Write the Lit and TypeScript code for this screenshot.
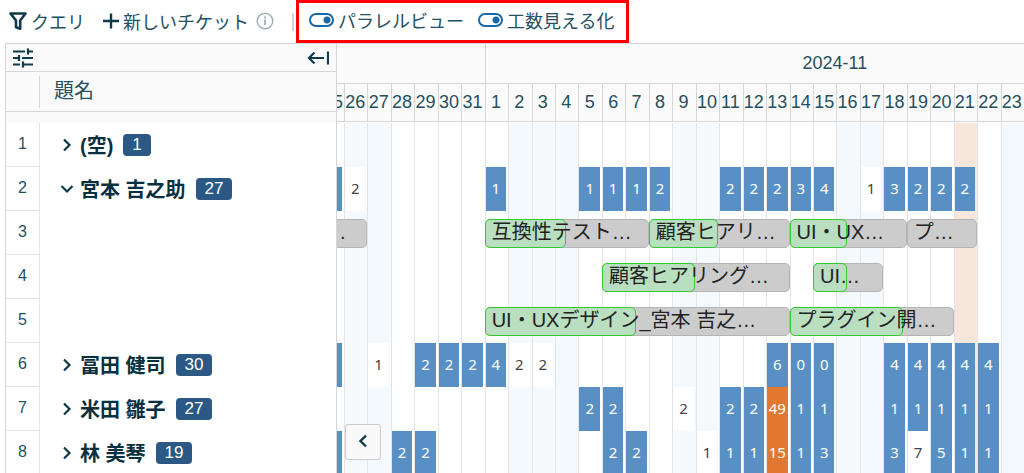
import { LitElement, html, css, svg, nothing } from "lit";
import { customElement, property } from "lit/decorators.js";
import { classMap } from "lit/directives/class-map.js";

interface Bar {
  from: number;
  to: number;
  progress: number;
  text: string;
}

interface Row {
  no: number;
  name?: string;
  count?: number;
  open?: boolean;
  load?: Record<number, number>;
  bars?: Bar[];
}

// Day index 0 is October 25; index 7 is November 1.
const NOV = 6;
const DAYS = Array.from({ length: 30 }, (_, i) => (i < 7 ? 25 + i : i - NOV));
const HOLIDAYS = new Set([1, 2, ...[2, 3, 4, 9, 10, 16, 17, 23].map((d) => d + NOV)]);
const TODAY = 21 + NOV;
const CAPACITY = 14;

const ROWS: Row[] = [
  { no: 1, name: "(空)", count: 1 },
  {
    no: 2, name: "宮本 吉之助", count: 27, open: true,
    load: { 0: 2, 1: 2, 7: 1, 11: 1, 12: 1, 13: 1, 14: 2, 17: 2, 18: 2, 19: 2, 20: 3, 21: 4, 23: 1, 24: 3, 25: 2, 26: 2, 27: 2 },
  },
  {
    no: 3,
    bars: [
      { from: 0, to: 1, progress: 0, text: "." },
      { from: 7, to: 13, progress: 50, text: "互換性テスト…" },
      { from: 14, to: 19, progress: 50, text: "顧客ヒアリ…" },
      { from: 20, to: 24, progress: 50, text: "UI・UX…" },
      { from: 25, to: 27, progress: 0, text: "プ…" },
    ],
  },
  {
    no: 4,
    bars: [
      { from: 12, to: 19, progress: 50, text: "顧客ヒアリング…" },
      { from: 21, to: 23, progress: 50, text: "UI…" },
    ],
  },
  {
    no: 5,
    bars: [
      { from: 7, to: 19, progress: 50, text: "UI・UXデザイン_宮本 吉之…" },
      { from: 20, to: 26, progress: 70, text: "プラグイン開…" },
    ],
  },
  {
    no: 6, name: "冨田 健司", count: 30,
    load: { 0: 2, 2: 1, 4: 2, 5: 2, 6: 2, 7: 4, 8: 2, 9: 2, 19: 6, 20: 0, 21: 0, 24: 4, 25: 4, 26: 4, 27: 4, 28: 4 },
  },
  {
    no: 7, name: "米田 雛子", count: 27,
    load: { 11: 2, 12: 2, 15: 2, 17: 2, 18: 2, 19: 49, 20: 1, 21: 1, 24: 1, 25: 1, 26: 1, 27: 1, 28: 1 },
  },
  {
    no: 8, name: "林 美琴", count: 19,
    load: { 0: 2, 3: 2, 4: 2, 12: 2, 13: 2, 16: 1, 17: 1, 18: 1, 19: 15, 20: 1, 21: 3, 24: 3, 25: 7, 26: 5, 27: 1, 28: 1 },
  },
];

// Days whose hours are shown without a filled background.
const PLAIN: Record<number, number[]> = { 2: [1, 23], 6: [2, 8, 9], 7: [15], 8: [16, 25] };

const icon = (w: number, h: number, body: unknown) =>
  html`<svg width=${w} height=${h} viewBox="0 0 ${w} ${h}" fill="none" stroke="currentColor" stroke-width="2" aria-hidden="true">${body}</svg>`;

const icons = {
  filter: icon(18, 18, svg`<path d="M1.500 1.500h15l-5.300 7v8.200l-4.200-1.500v-6.700z" stroke-width="2.600" stroke-linejoin="round"/>`),
  plus: icon(16, 16, svg`<path d="M8 0.500v15M0 8h16" stroke-width="2.400"/>`),
  info: icon(18, 18, svg`<circle cx="9" cy="9" r="7.800" stroke-width="1.500"/><path d="M9 7.500v5.500M9 4.600v1.800" stroke-width="1.800"/>`),
  tune: icon(20, 20, svg`<path d="M0 3.500h12M15 3.500h5M15 0.500v6M0 10h6M6 7v6M9 10h11M0 16.500h7M10 16.500h10M10 13.500v6" stroke-width="2.200"/>`),
  collapse: icon(22, 14, svg`<path d="M7.500 1.500 2 7l5.500 5.500M2 7h15M21 0.500v13" stroke-width="2.200"/>`),
  right: icon(10, 14, svg`<path d="m2 1.500 5.500 5.500-5.500 5.500" stroke-width="2.200"/>`),
  down: icon(14, 10, svg`<path d="m1.500 2 5.500 5.500 5.500-5.500" stroke-width="2.200"/>`),
  back: icon(10, 14, svg`<path d="M8 1.500 2.500 7 8 12.500" stroke-width="2.400"/>`),
};

@customElement("gantt-toolbar")
export class GanttToolbar extends LitElement {
  static styles = css`
    :host { display: flex; align-items: center; height: 43px; flex: none; padding-left: 9px; box-sizing: border-box; }
    button { display: flex; align-items: center; gap: 4px; padding: 0 0 2px; border: 0; background: none; color: #0e3a4a; font: inherit; white-space: nowrap; }
    svg { flex: none; }
    .text { color: #24505f; }
    .new { margin-left: 18px; }
    .info { color: #9fb0ba; margin-left: 7px; }
    .sep { width: 2px; height: 18px; margin-left: 18px; background: #d3d3d3; }
    .toggles { display: flex; align-items: center; gap: 14px; box-sizing: border-box; height: 43px; margin-left: 2px; padding: 0 12px 3px 10px; border: 3px solid #f00; }
    label { display: flex; align-items: center; gap: 4px; white-space: nowrap; color: #24505f; }
    input { appearance: none; box-sizing: border-box; width: 25px; height: 14px; margin: 0; border: 2px solid #1c68a6; border-radius: 7px; }
    input:checked { background: radial-gradient(circle at 16px 5px, #1c68a6 3px, transparent 4px); }
  `;

  render() {
    return html`
      <button type="button">${icons.filter}<span class="text">クエリ</span></button>
      <button type="button" class="new">${icons.plus}<span class="text">新しいチケット</span></button>
      <button type="button" class="info" aria-label="情報">${icons.info}</button>
      <span class="sep"></span>
      <div class="toggles">
        <label><input type="checkbox" checked />パラレルビュー</label>
        <label><input type="checkbox" checked />工数見える化</label>
      </div>
    `;
  }
}

@customElement("gantt-list")
export class GanttList extends LitElement {
  @property({ attribute: false }) rows: Row[] = [];

  static styles = css`
    :host { display: block; box-sizing: border-box; width: 332px; flex: none; border: 1px solid #d6d6d6; border-width: 1px 1px 0; overflow: hidden; }
    button { display: flex; padding: 0; border: 0; background: none; color: #0e3a4a; }
    .tools { display: flex; justify-content: space-between; align-items: center; height: 28px; padding: 0 7px; box-sizing: border-box; background: #fafafa; border-bottom: 1px solid #d6d6d6; }
    .title { display: flex; align-items: center; height: 40px; box-sizing: border-box; background: #fafafa; border-bottom: 1px solid #d6d6d6; font-size: 20px; color: #24505f; }
    .title::before { content: ""; width: 33px; height: 32px; border-right: 1px solid #d6d6d6; }
    .title span { padding: 0 0 4px 14px; }
    .gap { height: 11px; background: #fafafa; }
    .row { display: flex; height: 44px; }
    .no { display: flex; align-items: center; justify-content: center; box-sizing: border-box; width: 34px; padding-bottom: 2px; border: 1px solid #e4e4e4; border-width: 0 1px 1px 0; font: 16px "Liberation Sans", sans-serif; color: #24505f; }
    .name { display: flex; align-items: center; font-family: "Liberation Sans", "Noto Sans CJK JP", sans-serif; font-size: 20px; font-weight: bold; color: #08303f; }
    .name span { margin-bottom: 2px; }
    .name button { width: 20px; margin: 0 3px 0 17px; justify-content: center; }
    .name .badge { margin: 0 0 0 10px; padding: 0 9px; border-radius: 4px; background: #2b5884; color: #fff; font: 17px/22px "Liberation Sans", sans-serif; }
  `;

  render() {
    return html`
      <div class="tools">
        <button type="button" aria-label="設定">${icons.tune}</button>
        <button type="button" aria-label="折りたたむ">${icons.collapse}</button>
      </div>
      <div class="title"><span>題名</span></div>
      <div class="gap"></div>
      ${this.rows.map(
        (r) => html`<div class="row">
          <div class="no">${r.no}</div>
          ${r.name
            ? html`<div class="name">
                <button type="button" aria-label="開閉">${r.open ? icons.down : icons.right}</button>
                <span>${r.name}</span><span class="badge">${r.count}</span>
              </div>`
            : nothing}
        </div>`
      )}
    `;
  }
}

@customElement("gantt-timeline")
export class GanttTimeline extends LitElement {
  @property({ attribute: false }) rows: Row[] = [];

  static styles = css`
    :host { display: block; position: relative; flex: 1; min-width: 0; overflow: hidden; }
    .canvas { width: calc(7px + (100% - 7px) * 36 / 29); }
    .grid { display: grid; grid-template-columns: 7px repeat(36, minmax(0, 1fr)); }
    .head { box-sizing: border-box; background: #fafafa; border-top: 1px solid #d6d6d6; color: #24505f; font: 18px "Liberation Sans", sans-serif; }
    .months { height: 40px; }
    .month { display: flex; align-items: center; justify-content: center; }
    .month + .month { padding-right: 4px; border-left: 1px solid #d6d6d6; }
    .days { height: 39px; border-bottom: 1px solid #d6d6d6; }
    .day { display: flex; align-items: center; justify-content: center; padding-right: 2px; border-left: 1px solid #d6d6d6; }
    .day:first-child { justify-content: flex-end; padding-right: 1px; border: 0; overflow: hidden; }
    .body { padding-top: 1px; }
    .row { height: 44px; }
    .slot { grid-row: 1; border-left: 1px solid #e4e4e4; }
    .slot:first-child { border-left: 0; }
    .off { background: #f4f9fe; }
    .today { background: #f6e6dc; }
    .load { display: flex; align-items: center; justify-content: center; box-sizing: border-box; height: 44px; margin-right: 2px; padding-bottom: 2px; background: #5890c6; color: #fff; font: 15px "Noto Sans", sans-serif; }
    .plain { background: #fff; color: #444; }
    .over { background: #e27730; }
    .bar { grid-row: 1; position: relative; box-sizing: border-box; height: 29px; margin-top: 8px; border: 1px solid #b4b4b4; border-radius: 5px; background: #ccc; font: 20px/24px "Liberation Sans", "Noto Sans CJK JP", sans-serif; color: #222; white-space: nowrap; }
    .done { position: absolute; top: -1px; left: -1px; box-sizing: border-box; height: 29px; border: 1px solid #2fcb2f; border-radius: 5px; background: #b9dfc0; }
    .label { position: relative; display: block; padding-left: 6px; }
    .cut { border-left: 0; border-radius: 0 5px 5px 0; }
    .cut .label { padding-left: 3px; }
    .prev { position: absolute; left: 8px; bottom: 13px; display: flex; align-items: center; justify-content: center; width: 36px; height: 36px; padding: 0 0 2px; border: 1px solid #ccc; border-radius: 3px; background: #f9f9f9; color: #0e3a4a; }
  `;

  private slot_(row: Row, i: number) {
    const hours = row.load?.[i];
    const cls = {
      load: true,
      plain: !!PLAIN[row.no]?.includes(i),
      over: (hours ?? 0) > CAPACITY,
    };
    return html`<div class=${classMap({ slot: true, off: HOLIDAYS.has(i), today: i === TODAY })} style="grid-column:${i + 1}">
      ${hours === undefined ? nothing : html`<div class=${classMap(cls)}>${i === 0 ? nothing : hours}</div>`}
    </div>`;
  }

  private bar_(b: Bar) {
    return html`<div
      class=${classMap({ bar: true, cut: b.from === 0 })}
      style="grid-column:${b.from + 1} / ${b.to + 2}"
    >
      ${b.progress ? html`<div class="done" style="width:${b.progress}%"></div>` : nothing}
      <span class="label">${b.text}</span>
    </div>`;
  }

  render() {
    return html`
      <div class="canvas">
        <div class="grid head months">
          <div class="month" style="grid-column:1 / 8"></div>
          <div class="month" style="grid-column:8 / 38">2024-11</div>
        </div>
        <div class="grid head days">${DAYS.map((d) => html`<div class="day">${d}</div>`)}</div>
        <div class="body">
          ${this.rows.map(
            (r) => html`<div class="grid row">${DAYS.map((_, i) => this.slot_(r, i))}${r.bars?.map((b) => this.bar_(b))}</div>`
          )}
        </div>
      </div>
      <button type="button" class="prev" aria-label="前へ">${icons.back}</button>
    `;
  }
}

@customElement("app-root")
export class AppRoot extends LitElement {
  static styles = css`
    :host { display: flex; flex-direction: column; height: 100vh; overflow: hidden; background: #fff; font: 18px "Noto Sans", "Noto Sans CJK JP", sans-serif; }
    .main { display: flex; flex: 1; min-height: 0; padding-left: 5px; }
  `;

  render() {
    return html`
      <gantt-toolbar></gantt-toolbar>
      <div class="main">
        <gantt-list .rows=${ROWS}></gantt-list>
        <gantt-timeline .rows=${ROWS}></gantt-timeline>
      </div>
    `;
  }
}
